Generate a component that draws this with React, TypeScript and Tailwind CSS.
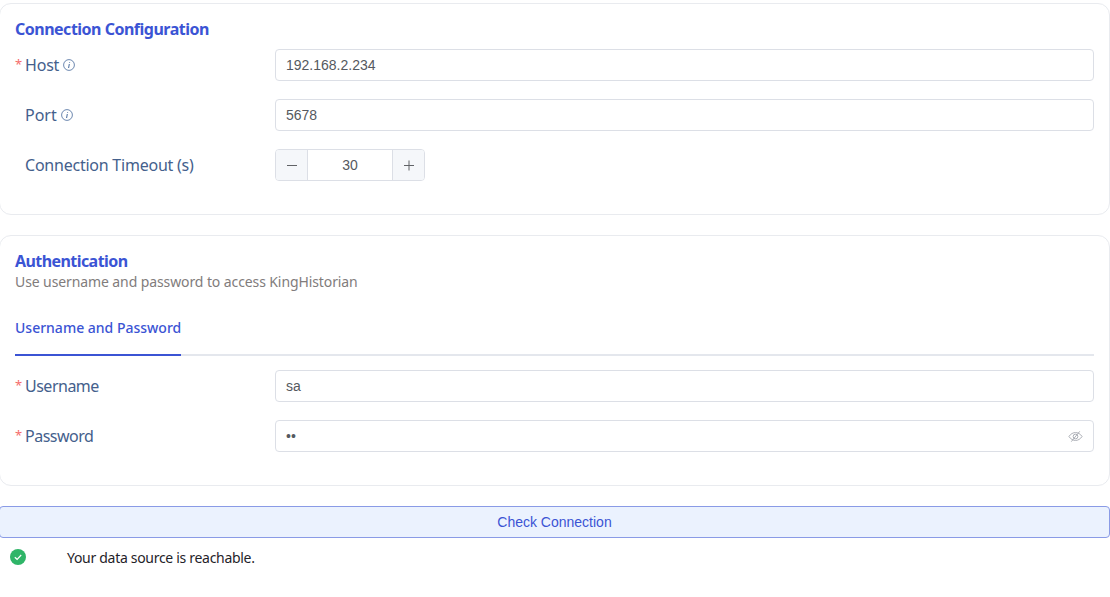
import React from "react";

const labelFont = "font-['Noto_Sans',sans-serif]";
const inputFont = "font-['Liberation_Sans',Arial,sans-serif]";

function Info() {
  return (
    <svg width="12" height="12" viewBox="0 0 12 12" fill="none" className="ml-1 text-[#476a9c]">
      <circle cx="6" cy="6" r="5.4" stroke="currentColor" strokeWidth="0.8" />
      <path d="M6.6 3v.7M6.300 5 5.600 9" stroke="currentColor" strokeWidth="1" />
    </svg>
  );
}

function Row({ label, tracking, required, info, children }: { label: string; tracking: string; required?: boolean; info?: boolean; children: React.ReactNode }) {
  return (
    <div className="flex h-8 items-center">
      <div className={`flex w-[260px] items-center text-[16px] text-[#44608c] ${labelFont}`}>
        <span className="w-[10px] text-[13px] text-[#f56c6c]">{required ? "*" : ""}</span>
        <span className={tracking}>{label}</span>
        {info && <Info />}
      </div>
      <div className="min-w-0 flex-1">{children}</div>
    </div>
  );
}

function TextInput({ value, eye }: { value: string; eye?: boolean }) {
  return (
    <div className={`flex h-8 items-center justify-between rounded-[4px] border border-[#dcdfe6] bg-white pl-[10px] pr-[10px] text-[14px] text-[#555960] ${inputFont}`}>
      <span>{value}</span>
      {eye && (
        <svg width="15" height="15" viewBox="0 0 16 16" fill="none" stroke="#a8abb2" strokeWidth="1">
          <path d="M1 8C2.900 5.200 5.300 3.800 8 3.800s5.100 1.400 7 4.200c-1.900 2.800-4.300 4.200-7 4.200S2.900 10.800 1 8Z" />
          <circle cx="8" cy="8" r="2.500" />
          <path d="M12.500 2.500 3.500 13.500" />
        </svg>
      )}
    </div>
  );
}

function Stepper() {
  return (
    <div className={`flex h-8 w-[150px] overflow-hidden rounded-[4px] border border-[#dcdfe6] text-[14px] text-[#555960] ${inputFont}`}>
      <div className="flex w-[32px] items-center justify-center border-r border-[#dcdfe6] bg-[#f5f7fa]">
        <svg width="12" height="12" viewBox="0 0 12 12" stroke="#606266" strokeWidth="1"><path d="M1 6.500h10" /></svg>
      </div>
      <div className="flex flex-1 items-center justify-center bg-white">30</div>
      <div className="flex w-[32px] items-center justify-center border-l border-[#dcdfe6] bg-[#f5f7fa]">
        <svg width="12" height="12" viewBox="0 0 12 12" stroke="#606266" strokeWidth="1"><path d="M1 6.500h10M6 1.500v10" /></svg>
      </div>
    </div>
  );
}

export default function App() {
  return (
    <div className={`h-[597px] w-[1110px] overflow-hidden bg-white ${labelFont}`}>
      <div className="-ml-px flex w-[1111px] flex-col pt-[3px]">
        <section className="h-[212px] rounded-[12px] border border-[#e9ebef] px-[15px] pt-[14px]">
          <h2 className="h-[23px] text-[16px] leading-[23px] font-bold tracking-[-0.5px] text-[#3b54d4]">Connection Configuration</h2>
          <div className="mt-[8px] flex flex-col gap-[18px]">
            <Row label="Host" tracking="tracking-[-0.2px]" required info><TextInput value="192.168.2.234" /></Row>
            <Row label="Port" tracking="tracking-normal" info><TextInput value="5678" /></Row>
            <Row label="Connection Timeout (s)" tracking="tracking-[-0.23px]"><Stepper /></Row>
          </div>
        </section>

        <section className="mt-[20px] h-[251px] rounded-[12px] border border-[#e9ebef] px-[15px] pt-[14px]">
          <h2 className="h-[23px] text-[16px] leading-[23px] font-bold tracking-[-0.57px] text-[#3b54d4]">Authentication</h2>
          <p className="h-[20px] -mt-px text-[14px] leading-[20px] tracking-[-0.1px] text-[#817c7c]">Use username and password to access KingHistorian</p>
          <div className="mt-[11px] border-b-2 border-[#e4e7ed]">
            <div className="-mb-[2px] flex h-[53px] w-fit items-start border-b-2 border-[#3b54d4] pt-[15px] text-[14px] leading-[20px] font-medium text-[#3b54d4]">
              Username and Password
            </div>
          </div>
          <div className="mt-[14px] flex flex-col gap-[18px]">
            <Row label="Username" tracking="tracking-[-0.5px]" required><TextInput value="sa" /></Row>
            <Row label="Password" tracking="tracking-[-0.5px]" required><TextInput value="••" eye /></Row>
          </div>
        </section>

        <button className={`mt-[20px] h-8 w-full rounded-[4px] border border-[#8a9be6] bg-[#ebf2fe] text-[14px] text-[#3b54d4] ${inputFont}`}>
          Check Connection
        </button>

        <div className="mt-[9px] flex h-[20px] items-center pl-[11px] text-[14px] tracking-[-0.3px] text-[#1f2329]">
          <svg width="16" height="16" viewBox="0 0 16 16">
            <circle cx="8" cy="8" r="8" fill="#2fb568" />
            <path d="M4.800 8.200 7.100 10.300 11.200 6" fill="none" stroke="#fff" strokeWidth="1.200" />
          </svg>
          <span className="ml-[41px]">Your data source is reachable.</span>
        </div>
      </div>
    </div>
  );
}
